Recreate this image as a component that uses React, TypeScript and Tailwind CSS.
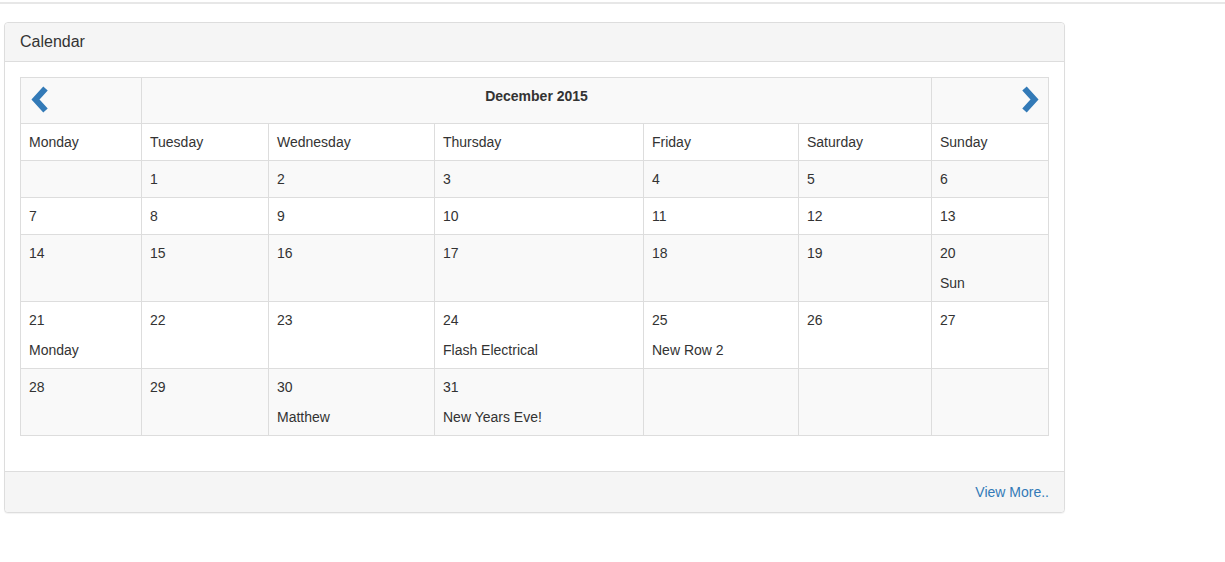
const days = ["Monday", "Tuesday", "Wednesday", "Thursday", "Friday", "Saturday", "Sunday"];
const widths = ["w-[121px]", "w-[127px]", "w-[166px]", "w-[209px]", "w-[155px]", "w-[133px]", "w-[117px]"];

type Cell = { day?: number; event?: string };

const weeks: Cell[][] = [
  [{}, { day: 1 }, { day: 2 }, { day: 3 }, { day: 4 }, { day: 5 }, { day: 6 }],
  [{ day: 7 }, { day: 8 }, { day: 9 }, { day: 10 }, { day: 11 }, { day: 12 }, { day: 13 }],
  [{ day: 14 }, { day: 15 }, { day: 16 }, { day: 17 }, { day: 18 }, { day: 19 }, { day: 20, event: "Sun" }],
  [
    { day: 21, event: "Monday" },
    { day: 22 },
    { day: 23 },
    { day: 24, event: "Flash Electrical" },
    { day: 25, event: "New Row 2" },
    { day: 26 },
    { day: 27 },
  ],
  [{ day: 28 }, { day: 29 }, { day: 30, event: "Matthew" }, { day: 31, event: "New Years Eve!" }, {}, {}, {}],
];

function Chevron({ dir }: { dir: "left" | "right" }) {
  return (
    <svg width="18" height="27" viewBox="0 0 18 27" className="block">
      <polyline
        points={dir === "left" ? "14.5,2.5 4.5,13.5 14.5,24.5" : "3.5,2.5 13.5,13.5 3.5,24.5"}
        fill="none"
        stroke="#337ab7"
        strokeWidth="6"
        strokeLinejoin="miter"
      />
    </svg>
  );
}

export default function App() {
  const td = "border border-[#ddd] p-2 align-top";
  return (
    <div className="min-h-screen bg-white text-[14px] leading-5 text-[#333] font-['Liberation_Sans',Arial,sans-serif]">
      <div className="h-[4px] border-b-2 border-[#e7e7e7]" />
      <div className="pl-1 pt-[18px]">
        <div className="w-[1061px] rounded border border-[#ddd] bg-white shadow-[0_1px_1px_rgba(0,0,0,0.05)]">
          <div className="rounded-t border-b border-[#ddd] bg-[#f5f5f5] px-[15px] py-[9px] text-[16px] leading-5">
            Calendar
          </div>
          <div className="p-[15px]">
            <table className="mb-5 w-[1029px] table-fixed border-collapse">
              <colgroup>
                {widths.map((w, i) => (
                  <col key={i} className={w} />
                ))}
              </colgroup>
              <tbody>
                <tr className="h-[46px] bg-[#f9f9f9]">
                  <td className="border border-[#ddd] px-2 py-0 align-middle">
                    <div className="pb-[2px] pl-[2px]">
                      <Chevron dir="left" />
                    </div>
                  </td>
                  <td colSpan={5} className="border border-[#ddd] pb-[10px] text-center align-middle font-bold">
                    December 2015
                  </td>
                  <td className="border border-[#ddd] px-2 py-0 align-middle">
                    <div className="flex justify-end pb-[2px] pr-[1px]">
                      <Chevron dir="right" />
                    </div>
                  </td>
                </tr>
                <tr>
                  {days.map((d) => (
                    <td key={d} className={td}>
                      {d}
                    </td>
                  ))}
                </tr>
                {weeks.map((week, wi) => (
                  <tr key={wi} className={wi % 2 === 0 ? "bg-[#f9f9f9]" : "bg-white"}>
                    {week.map((c, ci) => (
                      <td key={ci} className={td}>
                        {c.day !== undefined && <div>{c.day}</div>}
                        {c.event && <div className="mt-[10px]">{c.event}</div>}
                        {c.day === undefined && <div>&nbsp;</div>}
                      </td>
                    ))}
                  </tr>
                ))}
              </tbody>
            </table>
          </div>
          <div className="flex justify-end rounded-b border-t border-[#ddd] bg-[#f5f5f5] px-[15px] py-[10px]">
            <a href="#" className="text-[#337ab7]">
              View More..
            </a>
          </div>
        </div>
      </div>
    </div>
  );
}
